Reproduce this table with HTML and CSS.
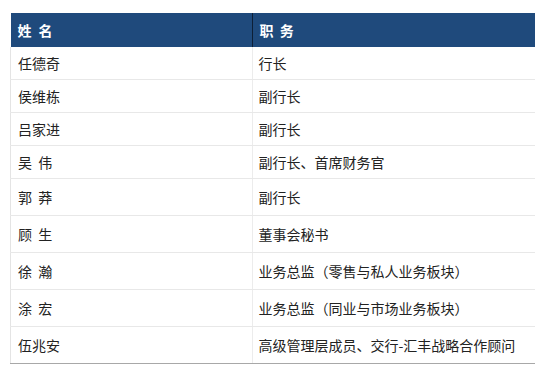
FILE: index.html
```html
<!DOCTYPE html>
<html lang="zh">
<head>
<meta charset="utf-8">
<link rel="stylesheet" href="styles.css">
</head>
<body>
<table class="tbl">
  <thead>
    <tr><th class="c1"><span class="sp">姓</span>名</th><th class="c2">职 &nbsp;务</th></tr>
  </thead>
  <tbody>
    <tr class="r-s"><td>任德奇</td><td>行长</td></tr>
    <tr class="r-s"><td>侯维栋</td><td>副行长</td></tr>
    <tr class="r-s"><td>吕家进</td><td>副行长</td></tr>
    <tr class="r-s"><td>吴&nbsp; 伟</td><td>副行长、首席财务官</td></tr>
    <tr class="r-l"><td>郭&nbsp; 莽</td><td>副行长</td></tr>
    <tr class="r-l"><td>顾&nbsp; 生</td><td>董事会秘书</td></tr>
    <tr class="r-l"><td>徐&nbsp; 瀚</td><td>业务总监（零售与私人业务板块）</td></tr>
    <tr class="r-l"><td>涂&nbsp; 宏</td><td>业务总监（同业与市场业务板块）</td></tr>
    <tr class="r-l last"><td>伍兆安</td><td>高级管理层成员、交行-汇丰战略合作顾问</td></tr>
  </tbody>
</table>
</body>
</html>
```

FILE: styles.css
```css
html, body {
  margin: 0;
  padding: 0;
  background: #fff;
  overflow: hidden;
}
body {
  padding: 13px 0 0 10px;
  font-family: "Noto Sans CJK SC", "Microsoft YaHei", sans-serif;
  font-size: 14px;
  color: #222;
}
.tbl {
  border-collapse: collapse;
  width: 525px;
  table-layout: fixed;
}
.tbl th, .tbl td {
  text-align: left;
  padding: 0 0 0 7px;
  white-space: nowrap;
  line-height: 1;
}
.tbl th {
  background: #1f4a7c;
  color: #fff;
  font-weight: bold;
  height: 33px;
  padding-bottom: 1px;
}
.sp {
  margin-right: 7px;
}
.tbl th.c1 {
  width: 234px;
  border-right: 1px solid #0d1f36;
}
.tbl td {
  border-bottom: 1px solid #e8e8e8;
}
.tbl td:first-child {
  border-left: 1px solid #e4e4e4;
  border-right: 1px solid #ececec;
}
.tbl td + td {
  padding-left: 6px;
}
.r-s td { height: 32px; }
.r-l td { height: 36px; }
.last td { border-bottom: 1px solid #a8a8a8; }
```
